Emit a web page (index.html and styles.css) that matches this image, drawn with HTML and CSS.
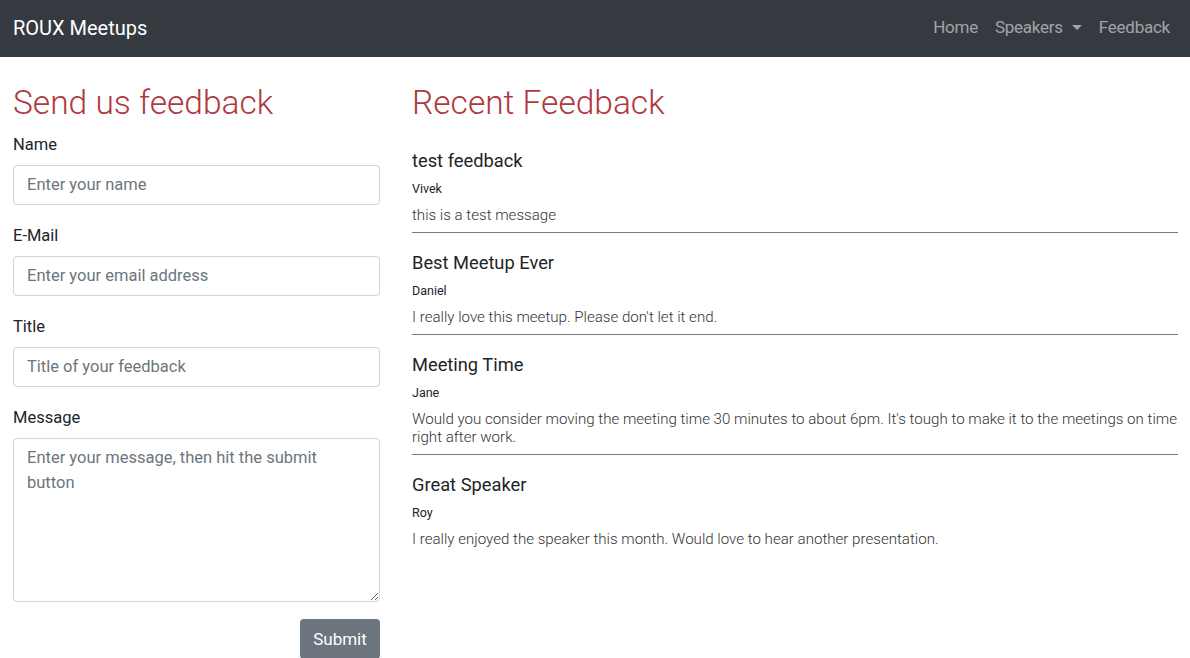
FILE: index.html
```html
<!DOCTYPE html>
<html lang="en">
<head>
<meta charset="utf-8">
<title>ROUX Meetups</title>
<link rel="stylesheet" href="styles.css">
</head>
<body>
<nav class="navbar">
  <a class="brand" href="#">ROUX Meetups</a>
  <ul class="nav">
    <li><a href="#">Home</a></li>
    <li><a href="#" class="dropdown">Speakers<span class="caret"></span></a></li>
    <li><a href="#">Feedback</a></li>
  </ul>
</nav>
<main class="content">
  <section class="form-col">
    <h1 class="page-title">Send us feedback</h1>
    <form class="feedback-form">
      <div class="group">
        <label for="name">Name</label>
        <input id="name" type="text" placeholder="Enter your name">
      </div>
      <div class="group">
        <label for="email">E-Mail</label>
        <input id="email" type="text" placeholder="Enter your email address">
      </div>
      <div class="group">
        <label for="title">Title</label>
        <input id="title" type="text" placeholder="Title of your feedback">
      </div>
      <div class="group">
        <label for="message">Message</label>
        <textarea id="message" placeholder="Enter your message, then hit the submit button"></textarea>
      </div>
      <div class="actions">
        <button type="button" class="btn">Submit</button>
      </div>
    </form>
  </section>
  <section class="list-col">
    <h1 class="page-title">Recent Feedback</h1>
    <div class="items">
      <article class="item">
        <h2 class="item-title">test feedback</h2>
        <div class="item-author">Vivek</div>
        <p class="item-msg">this is a test message</p>
      </article>
      <article class="item">
        <h2 class="item-title">Best Meetup Ever</h2>
        <div class="item-author">Daniel</div>
        <p class="item-msg">I really love this meetup. Please don't let it end.</p>
      </article>
      <article class="item">
        <h2 class="item-title">Meeting Time</h2>
        <div class="item-author">Jane</div>
        <p class="item-msg">Would you consider moving the meeting time 30 minutes to about 6pm. It's tough to make it to the meetings on time right after work.</p>
      </article>
      <article class="item last">
        <h2 class="item-title">Great Speaker</h2>
        <div class="item-author">Roy</div>
        <p class="item-msg">I really enjoyed the speaker this month. Would love to hear another presentation.</p>
      </article>
    </div>
  </section>
</main>
</body>
</html>
```
FILE: styles.css
```css
* { box-sizing: border-box; }
html, body {
  margin: 0;
  padding: 0;
}
body {
  font-family: Roboto, "Liberation Sans", sans-serif;
  color: #212529;
  background: #fff;
  font-size: 16px;
}
.navbar {
  height: 57px;
  background: #343a40;
  display: flex;
  align-items: center;
  justify-content: space-between;
  padding: 0 20px 0 13px;
}
.brand {
  color: #fff;
  text-decoration: none;
  font-size: 20px;
  line-height: 1;
  padding-bottom: 2px;
}
.nav {
  list-style: none;
  margin: 0;
  padding: 0;
  display: flex;
  gap: 17px;
}
.nav a {
  color: rgba(255,255,255,.55);
  text-decoration: none;
  font-size: 17px;
  letter-spacing: -0.25px;
  display: inline-flex;
  align-items: center;
  padding-bottom: 4px;
}
.caret {
  display: inline-block;
  margin-left: 9px;
  border-top: 5px solid rgba(255,255,255,.55);
  border-left: 5px solid transparent;
  border-right: 5px solid transparent;
  width: 0;
  height: 0;
  margin-top: 1px;
}
.content {
  display: grid;
  grid-template-columns: 367px 1fr;
  column-gap: 32px;
  padding: 0 12px 0 13px;
}
.page-title {
  font-weight: 300;
  font-size: 33.5px;
  color: #b0393f;
  margin: 25px 0 0;
  line-height: 42px;
}
.feedback-form {
  margin-top: 8px;
}
.group {
  margin-bottom: 18px;
}
label {
  display: block;
  font-size: 16.5px;
  line-height: 25px;
  margin-bottom: 8px;
  color: #212529;
}
input, textarea {
  display: block;
  width: 100%;
  border: 1px solid #ced4da;
  border-radius: 4px;
  font-family: Roboto, "Liberation Sans", sans-serif;
  font-size: 16.5px;
  color: #495057;
  padding: 5px 13px 7px;
}
input {
  height: 40px;
}
textarea {
  height: 164px;
  line-height: 25px;
  padding-top: 6px;
  resize: vertical;
}
input::placeholder, textarea::placeholder {
  color: #6c757d;
  opacity: 1;
}
.actions {
  display: flex;
  justify-content: flex-end;
  margin-top: -1px;
}
.btn {
  background: #6c757d;
  color: #fff;
  border: 0;
  border-radius: 4px;
  font-family: Roboto, "Liberation Sans", sans-serif;
  font-size: 17px;
  width: 80px;
  height: 40px;
  padding: 0;
}
.items {
  margin-top: 25px;
}
.item {
  border-bottom: 1px solid #7a7a7a;
  padding-bottom: 8px;
  margin-bottom: 18px;
}
.item.last {
  border-bottom: 0;
}
.item-title {
  font-size: 18.3px;
  font-weight: 400;
  line-height: 24px;
  margin: 0;
  color: #212529;
}
.item-author {
  font-size: 12.5px;
  line-height: 16px;
  margin-top: 8px;
  color: #212529;
}
.item-msg {
  font-size: 15.1px;
  font-weight: 300;
  line-height: 18px;
  margin: 9px 0 0;
  color: #333;
}
```
